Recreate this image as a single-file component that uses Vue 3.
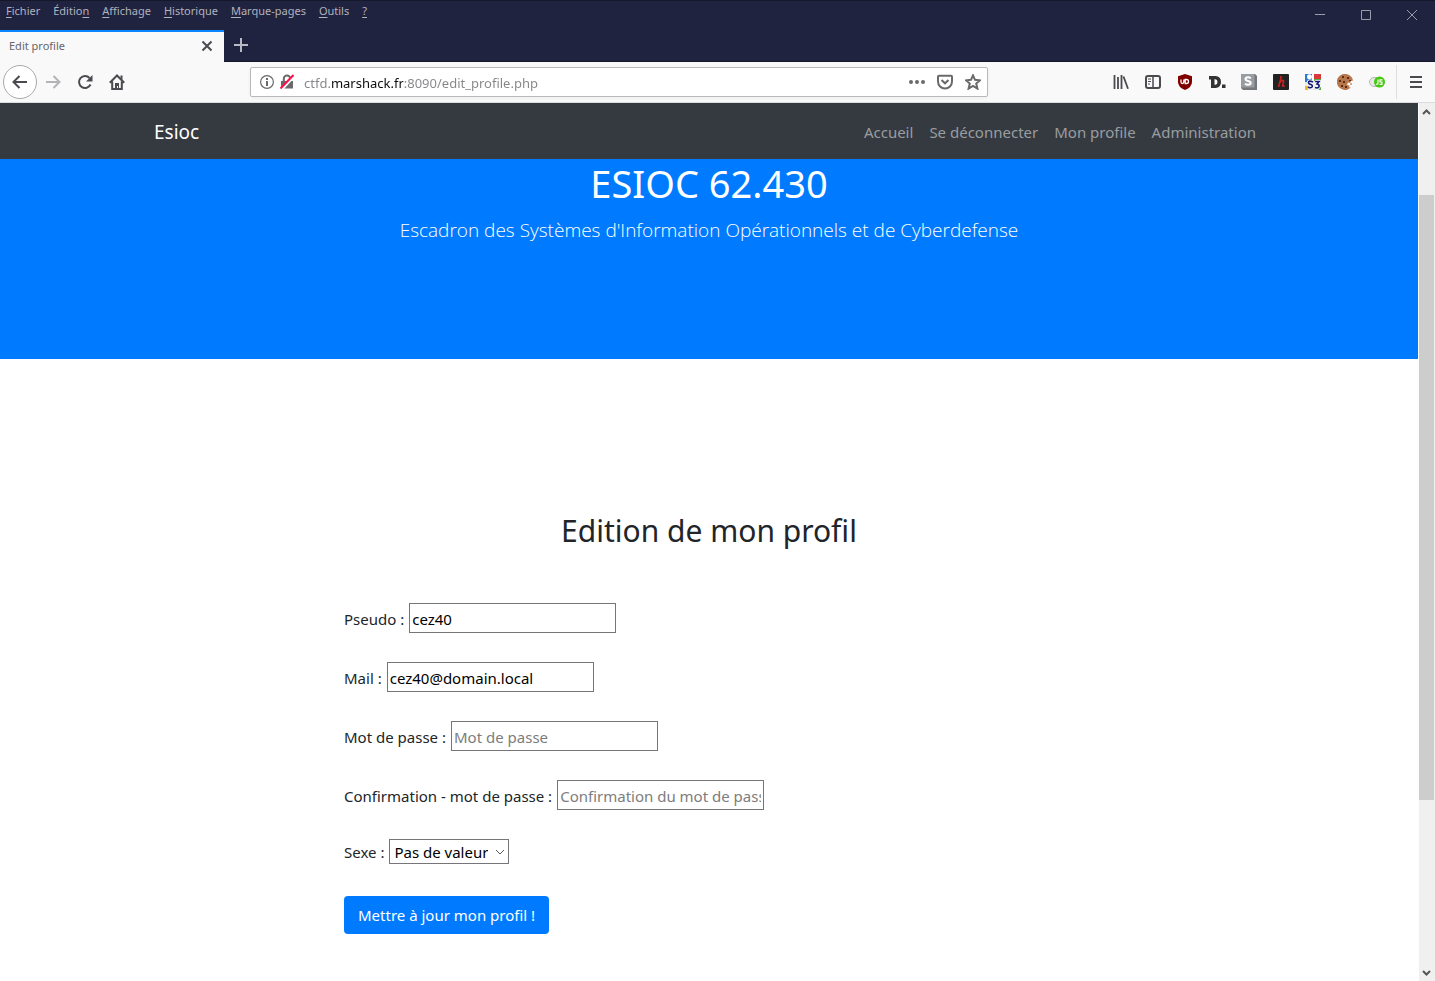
<script setup>
import { ref } from 'vue'

const menus = [
  { before: '', key: 'F', after: 'ichier' },
  { before: 'Éditio', key: 'n', after: '' },
  { before: '', key: 'A', after: 'ffichage' },
  { before: '', key: 'H', after: 'istorique' },
  { before: '', key: 'M', after: 'arque-pages' },
  { before: '', key: 'O', after: 'utils' },
  { before: '', key: '?', after: '' },
]
const links = ['Accueil', 'Se déconnecter', 'Mon profile', 'Administration']

const address = ref('ctfd.marshack.fr:8090/edit_profile.php')
const pseudo = ref('cez40')
const mail = ref('cez40@domain.local')
const password = ref('')
const confirmation = ref('')
const sexe = ref('none')
</script>

<template>
  <div class="window">
    <header class="titlebar">
      <div class="top-row">
        <div class="menubar">
          <button v-for="m in menus" :key="m.key" type="button" class="menu">{{ m.before }}<u>{{ m.key }}</u>{{ m.after }}</button>
        </div>
        <div class="controls">
          <button type="button" class="control" aria-label="Réduire">
            <svg width="12" height="12" viewBox="0 0 12 12"><path d="M1 5.500H11" /></svg>
          </button>
          <button type="button" class="control" aria-label="Agrandir">
            <svg width="12" height="12" viewBox="0 0 12 12"><path d="M1.500 1.500H10.500V10.500H1.500Z" /></svg>
          </button>
          <button type="button" class="control" aria-label="Fermer">
            <svg width="12" height="12" viewBox="0 0 12 12"><path d="M1 1L11 11M11 1L1 11" /></svg>
          </button>
        </div>
      </div>
      <div class="tabs">
        <div class="tab">
          <span>Edit profile</span>
          <button type="button" class="tab-close" aria-label="Fermer l’onglet">
            <svg width="12" height="12" viewBox="0 0 12 12"><path d="M1.500 1.500L10.500 10.500M10.500 1.500L1.500 10.500" /></svg>
          </button>
        </div>
        <button type="button" class="new-tab" aria-label="Nouvel onglet">
          <svg width="14" height="14" viewBox="0 0 14 14"><path d="M7 0V14M0 7H14" /></svg>
        </button>
      </div>
    </header>

    <div class="toolbar">
      <button type="button" class="back" aria-label="Précédent">
        <svg class="line" width="16" height="16" viewBox="0 0 16 16"><path d="M15 8H1.500M7.500 2L1.500 8L7.500 14" /></svg>
      </button>
      <button type="button" class="tool faded" aria-label="Suivant">
        <svg class="line" width="16" height="16" viewBox="0 0 16 16"><path d="M1 8H14.500M8.500 2L14.500 8L8.500 14" /></svg>
      </button>
      <button type="button" class="tool" aria-label="Actualiser">
        <svg class="line" width="16" height="16" viewBox="0 0 16 16">
          <path d="M12.500 4A6 6 0 1 0 13.500 10.500" />
          <path d="M15.500 1V7.500H9Z" fill="currentColor" stroke="none" />
        </svg>
      </button>
      <button type="button" class="tool" aria-label="Accueil du navigateur">
        <svg class="line" width="16" height="16" viewBox="0 0 16 16">
          <path d="M0.800 8.700L8 1.500L15.200 8.700M3.200 7.500V15H12.800V7.500" />
          <path d="M11.500 1.500H13.500V6L11.500 4ZM6 9H10V15H9V12H8V15H6Z" fill="currentColor" stroke="none" />
        </svg>
      </button>

      <div class="urlbar">
        <svg class="info" width="14" height="14" viewBox="0 0 14 14">
          <circle cx="7" cy="7" r="6.400" fill="none" stroke="currentColor" stroke-width="1.200" />
          <path d="M6 6H8V11H6ZM6 3H8V5H6Z" fill="currentColor" />
        </svg>
        <svg class="lock" width="14" height="16" viewBox="0 0 14 16">
          <path d="M1 7H13V14.500H1Z" fill="currentColor" />
          <path d="M3.800 7V4.800A3.200 3.200 0 0 1 10.200 4.800V7" fill="none" stroke="currentColor" stroke-width="2" />
          <path d="M1 16L14 2" stroke="#fff" stroke-width="3" />
          <path d="M0.500 14.500L13.500 1" stroke="#ff0f4b" stroke-width="2" />
        </svg>
        <input v-model="address" class="address" type="text" aria-label="Adresse" spellcheck="false" />
        <button type="button" class="page-action" aria-label="Actions">
          <svg width="16" height="16" viewBox="0 0 16 16"><circle cx="2" cy="8" r="2" /><circle cx="8" cy="8" r="2" /><circle cx="14" cy="8" r="2" /></svg>
        </button>
        <button type="button" class="page-action" aria-label="Pocket">
          <svg width="16" height="16" viewBox="0 0 16 16" class="outline">
            <path d="M2 1.800H14Q15 1.800 15 2.800V7.500A7 7 0 0 1 1 7.500V2.800Q1 1.800 2 1.800Z" /><path d="M4.500 6L8 9.300L11.500 6" />
          </svg>
        </button>
        <button type="button" class="page-action" aria-label="Marquer cette page">
          <svg width="16" height="16" viewBox="0 0 16 16" class="outline">
            <path d="M8 1.300L10 5.800L15 6.300L11.200 9.600L12.400 14.600L8 12L3.600 14.600L4.800 9.600L1 6.300L6 5.800Z" />
          </svg>
        </button>
      </div>

      <button type="button" class="tool" aria-label="Bibliothèque">
        <svg class="line" width="16" height="16" viewBox="0 0 16 16"><path d="M1.500 1V15M5 3V15M8.500 1V15M10.500 2.500L15 14.700" stroke-width="1.800" /></svg>
      </button>
      <button type="button" class="tool" aria-label="Panneaux latéraux">
        <svg class="line" width="16" height="16" viewBox="0 0 16 16">
          <rect x="1" y="2" width="14" height="12" rx="2" /><path d="M8 2V14" stroke-width="1.500" /><path d="M3 5H6M3 7.500H6M3 10H5" stroke-width="1" />
        </svg>
      </button>
      <button type="button" class="tool" aria-label="uBlock Origin">
        <svg width="16" height="16" viewBox="0 0 16 16">
          <path d="M8 0L15 2.300V8Q15 13 8 16Q1 13 1 8V2.300Z" fill="#800000" />
          <path d="M4 5.500V8Q4 9.500 5.400 9.500T6.800 8V5.500M8.200 5.500V9.500H9.500A2 2 0 0 0 9.500 5.500H7.500" fill="none" stroke="#fff" stroke-width="1.300" />
        </svg>
      </button>
      <button type="button" class="tool" aria-label="Disconnect">
        <svg width="18" height="16" viewBox="0 0 18 16">
          <path d="M1 2H7.500Q13 2.500 13 8T7.500 14H3V5.500H1ZM6.500 5.300V10.700H7.500Q9.500 10.500 9.500 8T7.500 5.300Z" fill="#333" fill-rule="evenodd" />
          <rect x="14" y="10.500" width="3.500" height="3.500" fill="#333" />
        </svg>
      </button>
      <button type="button" class="tool" aria-label="Stylus">
        <svg width="16" height="16" viewBox="0 0 16 16">
          <path d="M0 0H14L16 2V16H2L0 14Z" fill="#74777b" /><path d="M0 0H13.500V13.500H0Z" fill="#999ca0" />
          <path d="M9.800 4.300Q8.500 3.300 7 3.300Q4.500 3.300 4.500 5.100Q4.500 6.500 7 7Q9.700 7.500 9.700 9Q9.700 10.800 7 10.800Q5.300 10.800 4 9.800" fill="none" stroke="#fff" stroke-width="2" />
        </svg>
      </button>
      <button type="button" class="tool" aria-label="HackBar">
        <svg width="16" height="16" viewBox="0 0 16 16">
          <rect width="16" height="16" rx="1" fill="#222" />
          <path d="M8.500 2.500L5.500 13M6.500 9Q9 5.800 10.500 6.500Q11 7 9.500 11.500Q9.500 13 11.500 11.500M7 2.700H8.500" fill="none" stroke="#c9211f" stroke-width="1.600" />
        </svg>
      </button>
      <button type="button" class="tool" aria-label="S3 Google Translator">
        <svg width="16" height="16" viewBox="0 0 16 16">
          <rect width="16" height="16" fill="#e4efe0" /><rect width="8" height="8" fill="#2b7bd0" /><rect x="8" width="8" height="5" fill="#d8383b" />
          <rect x="8" y="5" width="8" height="2" fill="#55ad48" /><rect y="12" width="3" height="4" fill="#e6b928" /><rect x="14" y="13" width="2" height="3" fill="#55ad48" />
          <circle cx="4.500" cy="2.800" r="2.500" fill="#fff" /><path d="M7 0H9V7H7Z" fill="#fff" />
          <path d="M8 8Q3.500 6 3.500 8.500Q3.500 10 6 10.500Q8 11.500 7 13Q5.500 14.500 3 13M10 7.500H14L12 10Q14.500 10.500 14 12.500T10 13.500" fill="none" stroke="#fff" stroke-width="3.200" />
          <path d="M8 8Q3.500 6 3.500 8.500Q3.500 10 6 10.500Q8 11.500 7 13Q5.500 14.500 3 13M10 7.500H14L12 10Q14.500 10.500 14 12.500T10 13.500" fill="none" stroke="#18187b" stroke-width="1.700" />
        </svg>
      </button>
      <button type="button" class="tool" aria-label="Cookies">
        <svg width="16" height="16" viewBox="0 0 16 16">
          <path d="M9 0A8 8 0 1 0 14 13L12 13.500L12.500 11.500L10 11L11 8.500L13 9L14 7L16 6.500Q15 1 9 0Z" fill="#b8764b" />
          <path d="M5 2H7V4H5ZM10 3H12V5H10ZM2 6H4V8H2ZM6 7H8V9H6ZM4 11H6V13H4ZM8 12H10V14H8ZM12 6H14V7H12Z" fill="#5a2d1a" />
          <path d="M13 9H15V11H13Z" fill="#d9a98a" />
        </svg>
      </button>
      <button type="button" class="tool" aria-label="JavaScript activé">
        <svg width="16" height="16" viewBox="0 0 16 16">
          <rect x="0.500" y="3.500" width="14" height="9" rx="4.500" fill="#e8e8e8" stroke="#b8b8b8" /><circle cx="10.500" cy="8" r="5.500" fill="#45c80d" />
          <path d="M9 5.500V9.500Q9 10.500 7 10.200M13.500 5.800H11V8H13V10.300H10.500" fill="none" stroke="#fff" stroke-width="1.200" />
        </svg>
      </button>
      <span class="separator"></span>
      <button type="button" class="tool" aria-label="Ouvrir le menu">
        <svg class="line" width="16" height="16" viewBox="0 0 16 16"><path d="M2 3H14M2 8H14M2 13H14" /></svg>
      </button>
    </div>

    <div class="viewport">
      <div class="page">
        <nav class="navbar">
          <div class="container nav-inner">
            <a href="#" class="brand">Esioc</a>
            <div class="links">
              <a v-for="l in links" :key="l" href="#">{{ l }}</a>
            </div>
          </div>
        </nav>
        <section class="hero">
          <h1>ESIOC 62.430</h1>
          <p>Escadron des Systèmes d'Information Opérationnels et de Cyberdefense</p>
        </section>
        <main class="container">
          <form class="profile" @submit.prevent>
            <h2>Edition de mon profil</h2>
            <div class="field">
              <label for="pseudo">Pseudo :</label>
              <input id="pseudo" v-model="pseudo" type="text" />
            </div>
            <div class="field">
              <label for="mail">Mail :</label>
              <input id="mail" v-model="mail" type="text" />
            </div>
            <div class="field">
              <label for="password">Mot de passe :</label>
              <input id="password" v-model="password" type="password" placeholder="Mot de passe" />
            </div>
            <div class="field">
              <label for="confirmation">Confirmation - mot de passe :</label>
              <input id="confirmation" v-model="confirmation" type="password" placeholder="Confirmation du mot de passe" />
            </div>
            <div class="field">
              <label for="sexe">Sexe :</label>
              <span class="select">
                <select id="sexe" v-model="sexe">
                  <option value="none">Pas de valeur</option>
                </select>
                <svg width="10" height="6" viewBox="0 0 10 6"><path d="M1 1L5 5L9 1" /></svg>
              </span>
            </div>
            <button type="submit" class="submit">Mettre à jour mon profil !</button>
          </form>
        </main>
      </div>
      <div class="scrollbar">
        <svg width="9" height="6" viewBox="0 0 9 6"><path d="M1 5L4.500 1.500L8 5" /></svg>
        <div class="track"><div class="thumb"></div></div>
        <svg width="9" height="6" viewBox="0 0 9 6"><path d="M1 1L4.500 4.500L8 1" /></svg>
      </div>
    </div>
  </div>
</template>

<style>
body {
  background: #fff;
}
</style>

<style scoped>
* {
  box-sizing: border-box;
}
.window {
  display: flex;
  flex-direction: column;
  min-height: 100vh;
  font-family: "Noto Sans", "Open Sans", sans-serif;
  font-size: 15px;
  line-height: 24px;
  color: #212529;
}
button {
  font: inherit;
  color: inherit;
  background: none;
  border: 0;
  padding: 0;
}
svg {
  display: block;
  flex: none;
}
.titlebar {
  height: 62px;
  background: #202340;
  border-top: 1px solid #15172b;
  border-bottom: 1px solid #15172b;
  color: #b1b2bd;
}
.top-row {
  display: flex;
  justify-content: space-between;
  height: 29px;
}
.menubar {
  display: flex;
  align-items: flex-start;
  gap: 1px;
}
.menu {
  padding: 0 6px;
  font-size: 11px;
  line-height: 20px;
}
.menu u {
  text-underline-offset: 2px;
}
.controls {
  display: flex;
  height: 28px;
}
.control {
  display: grid;
  place-items: center;
  width: 46px;
}
.control path {
  fill: none;
  stroke: #9c9daa;
}
.tabs {
  display: flex;
  height: 32px;
}
.tab {
  display: flex;
  align-items: center;
  justify-content: space-between;
  width: 224px;
  padding: 0 11px 2px 9px;
  background: #f9f9fa;
  border-top: 2px solid #0a84ff;
  color: #65656b;
  font-size: 11px;
}
.tab-close path {
  fill: none;
  stroke: #4a4a4f;
  stroke-width: 2;
}
.new-tab {
  display: grid;
  place-items: center;
  width: 34px;
  height: 30px;
}
.new-tab path {
  stroke: #b9bac6;
  stroke-width: 2;
}
.toolbar {
  display: flex;
  align-items: center;
  height: 41px;
  padding: 0 3px;
  background: #f9f9fa;
  border-bottom: 1px solid #dcdcdf;
  color: #4a4a4f;
}
.back {
  display: grid;
  place-items: center;
  width: 34px;
  height: 34px;
  border: 1px solid #a9a9ab;
  border-radius: 50%;
  background: #fff;
}
.tool {
  display: grid;
  place-items: center;
  flex: none;
  width: 32px;
  height: 32px;
}
.faded {
  color: #b4b4b6;
}
.line {
  fill: none;
  stroke: currentColor;
  stroke-width: 2;
}
.urlbar {
  display: flex;
  align-items: center;
  flex: 1;
  min-width: 0;
  height: 30px;
  margin: 0 117px;
  padding: 0 0 0 9px;
  background: #fff;
  border: 1px solid #b9b9bb;
  border-radius: 2px;
  box-shadow: 0 1px 4px #0000000d;
  color: #6a6a6d;
}
.info {
  margin-right: 6px;
}
.lock {
  margin-right: 10px;
}
.address {
  flex: 1;
  min-width: 0;
  height: 26px;
  padding: 2px 0 0;
  border: 0;
  outline: 0;
  font: 13px/24px "Noto Sans", "Open Sans", sans-serif;
  color: transparent;
  caret-color: #0c0c0d;
  background: linear-gradient(90deg, #858588 27px, #0c0c0d 27px, #0c0c0d 99px, #858588 99px);
  background-clip: text;
}
.page-action {
  display: grid;
  place-items: center;
  width: 28px;
  height: 28px;
}
.page-action svg {
  fill: currentColor;
}
.page-action .outline {
  fill: none;
  stroke: currentColor;
  stroke-width: 2;
}
.separator {
  width: 1px;
  height: 34px;
  margin: 0 3px;
  background: #dededf;
}
.viewport {
  display: flex;
  flex: 1;
}
.page {
  flex: 1;
  min-width: 0;
}
.container {
  width: 100%;
  max-width: 1140px;
  margin: 0 auto;
  padding: 0 15px;
}
.navbar {
  background: #343a40;
}
.nav-inner {
  display: flex;
  align-items: center;
  justify-content: space-between;
  height: 56px;
  padding-top: 2px;
}
.navbar a {
  text-decoration: none;
}
.brand {
  font-size: 19px;
  line-height: 30px;
  color: #fff;
}
.links a {
  display: inline-block;
  padding: 8px;
  color: #9a9da0;
}
.links {
  display: flex;
}
.hero {
  min-height: 200px;
  background: #007bff;
  color: #fff;
  text-align: center;
}
h1,
h2,
.hero p {
  margin: 0;
  font-weight: 400;
}
h1 {
  padding-bottom: 8px;
  font-size: 38px;
  line-height: 48px;
}
.hero p {
  font-family: "Open Sans", "Noto Sans", sans-serif;
  font-size: 19px;
  line-height: 30px;
  font-weight: 300;
}
.profile {
  max-width: 730px;
  margin: 0 auto;
  padding: 153px 0 47px;
}
h2 {
  margin-bottom: 53px;
  font-size: 30px;
  line-height: 38px;
  text-align: center;
}
.field {
  display: flex;
  align-items: baseline;
  gap: 5px;
  margin-bottom: 29px;
}
.field input {
  width: 207px;
  height: 30px;
  padding: 2px 2px 0;
  border: 1px solid #76767a;
  border-radius: 0;
  background: #fff;
  font: inherit;
  color: #000;
}
.field input::placeholder {
  color: #7d7d7d;
}
.select {
  display: grid;
  align-items: center;
}
.select select {
  grid-area: 1 / 1;
  height: 25px;
  padding: 0 20px 0 4px;
  appearance: none;
  border: 1px solid #76767a;
  border-radius: 0;
  background: #fff;
  font: inherit;
  color: #000;
}
.select svg {
  grid-area: 1 / 1;
  justify-self: end;
  margin-right: 4px;
  pointer-events: none;
}
.select path {
  fill: none;
  stroke: #555;
}
.submit {
  height: 38px;
  margin-top: 3px;
  padding: 0 14px;
  border-radius: 4px;
  background: #007bff;
  color: #fff;
}
.scrollbar {
  display: flex;
  flex-direction: column;
  align-items: center;
  width: 17px;
  padding: 6px 1px 5px 0;
  background: #f0f0f0;
  border-left: 1px solid #fff;
}
.scrollbar path {
  fill: none;
  stroke: #555;
  stroke-width: 2;
}
.track {
  flex: 1;
  align-self: stretch;
  padding: 80px 0 0;
}
.thumb {
  height: 78%;
  background: #cdcdcd;
}
</style>
